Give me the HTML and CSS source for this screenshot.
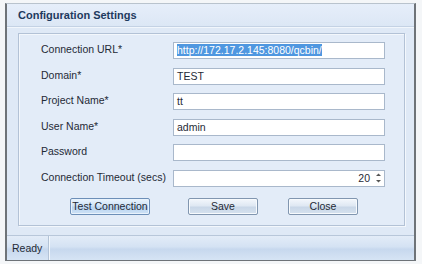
FILE: index.html
```html
<!DOCTYPE html>
<html lang="en">
<head>
    <meta charset="UTF-8">
    <meta name="viewport" content="width=device-width, initial-scale=1.0">
    <title>Configuration Settings</title>
    <link rel="stylesheet" href="styles.css">
</head>
<body>
    <div class="window">
        <div class="header">Configuration Settings</div>

        <div class="group">
            <div class="form">
                <label>Connection URL*</label>
                <div class="field"><span class="selected">http://172.17.2.145:8080/qcbin/</span></div>

                <label>Domain*</label>
                <div class="field">TEST</div>

                <label>Project Name*</label>
                <div class="field">tt</div>

                <label>User Name*</label>
                <div class="field">admin</div>

                <label>Password</label>
                <div class="field"></div>

                <label>Connection Timeout (secs)</label>
                <div class="field spinner">
                    <span class="value">20</span>
                    <span class="arrows">
                        <svg width="7" height="12" viewBox="0 0 7 12">
                            <path d="M1 4 L3.5 1.5 L6 4 Z" fill="#555"/>
                            <path d="M1 8 L3.5 10.5 L6 8 Z" fill="#555"/>
                        </svg>
                    </span>
                </div>
            </div>

            <div class="buttons">
                <button class="btn btn-test">Test Connection</button>
                <button class="btn btn-save">Save</button>
                <button class="btn btn-close">Close</button>
            </div>
        </div>

        <div class="statusbar">
            <span class="status-text">Ready</span>
        </div>
    </div>
</body>
</html>
```

FILE: styles.css
```css
body {
    margin: 0;
    padding: 3px 6px 0 5px;
    background-color: #f4f6f8;
    font-family: 'Liberation Sans', Arial, sans-serif;
    font-size: 10.5px;
    color: #1f2a36;
}

.window {
    height: 258px;
    box-sizing: border-box;
    border: 2px solid #6e7378;
    border-top: 1px solid #b9c3cd;
    background-color: #dfe9f6;
    display: flex;
    flex-direction: column;
}

.header {
    height: 23px;
    line-height: 22px;
    padding-left: 11px;
    font-weight: bold;
    font-size: 11px;
    color: #1e3a5e;
    border-bottom: 1px solid #c4d2e4;
    box-shadow: 0 1px 0 #f1f6fc;
    background: linear-gradient(#e6eefa, #dce7f5);
}

.group {
    margin: 6px 9px 0 11px;
    border: 1px solid #b3c2d6;
    box-shadow: 1px 1px 0 #f3f7fc inset, 1px 1px 0 #f3f7fc;
    background-color: #e3ecf8;
    padding: 8px 19px 10px 22px;
}

.form {
    display: grid;
    grid-template-columns: 132px 1fr;
    grid-auto-rows: 17px;
    row-gap: 8.5px;
    align-items: center;
}

.form label {
    color: #1f2a36;
    margin-top: -3px;
    white-space: nowrap;
}

.field {
    height: 17px;
    box-sizing: border-box;
    border: 1px solid #a9b8cb;
    background-color: #ffffff;
    padding: 0 3px;
    line-height: 15px;
    white-space: nowrap;
    overflow: hidden;
}

.selected {
    background-color: #4f97e0;
    color: #ffffff;
}

.spinner {
    display: flex;
    justify-content: flex-end;
    align-items: center;
    padding-right: 2px;
}

.spinner .value {
    margin-right: 5px;
}

.spinner .arrows {
    display: flex;
}

.buttons {
    display: flex;
    margin-top: 11px;
    padding-left: 29px;
}

.btn {
    height: 17px;
    padding: 0;
    white-space: nowrap;
    font-family: 'Liberation Sans', Arial, sans-serif;
    font-size: 10.5px;
    color: #1f2a36;
    border: 1px solid #8196b0;
    border-radius: 2px;
    background: linear-gradient(#f3f7fc 0%, #dfe8f3 45%, #c9d7e8 55%, #d6e2ef 100%);
    box-shadow: inset 0 0 0 1px #f7fafd;
}

.btn-test {
    width: 80px;
    border-color: #6d8fb8;
    background: linear-gradient(#eaf4fd 0%, #cfe3f7 45%, #b8d4f0 55%, #cfe2f6 100%);
    box-shadow: inset 0 0 0 1px #e8f2fc;
}

.btn-save {
    width: 70px;
    margin-left: 38px;
}

.btn-close {
    width: 70px;
    margin-left: 30px;
}

.statusbar {
    margin-top: 9px;
    flex: 1;
    border-top: 1px solid #b8c7da;
    background: linear-gradient(#e3ecf8 0%, #d4e2f3 45%, #c7d8ee 55%, #d6e4f4 100%);
    display: flex;
}

.status-text {
    width: 36px;
    padding-left: 5px;
    line-height: 24px;
    color: #1f2a36;
    border-right: 1px solid #b3c3d7;
    box-shadow: 1px 0 0 #f2f7fc;
}
```
